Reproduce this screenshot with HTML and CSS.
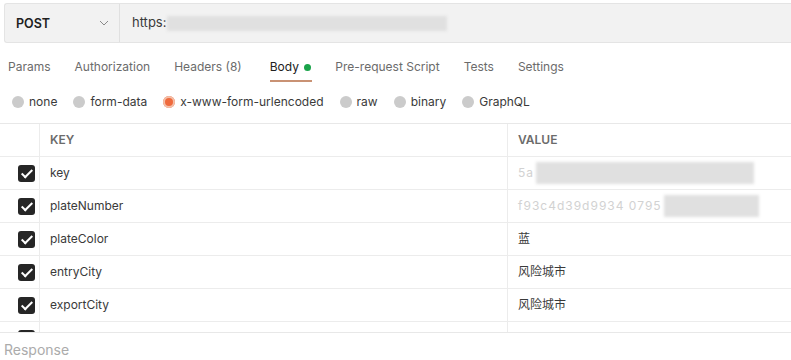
FILE: index.html
```html
<!DOCTYPE html>
<html lang="en">
  <head>
    <meta charset="UTF-8" />
    <title>Request</title>
    <link rel="stylesheet" href="styles.css">
  </head>
  <body>
    <div class="urlbar">
      <div class="method">
        <span>POST</span>
        <svg width="10" height="6" viewBox="0 0 10 6"><path d="M1 1l4 4 4-4" fill="none" stroke="#8a8a8a" stroke-width="1"/></svg>
      </div>
      <div class="url">
        <span>https:</span>
        <span class="blur url-blur"></span>
      </div>
    </div>

    <nav class="tabs">
      <span>Params</span>
      <span>Authorization</span>
      <span class="wide">Headers <em>(8)</em></span>
      <span class="active">Body <i class="dot"></i></span>
      <span>Pre-request Script</span>
      <span>Tests</span>
      <span>Settings</span>
    </nav>

    <div class="types">
      <label><i class="radio"></i>none</label>
      <label><i class="radio"></i>form-data</label>
      <label><i class="radio on"></i>x-www-form-urlencoded</label>
      <label><i class="radio"></i>raw</label>
      <label><i class="radio"></i>binary</label>
      <label><i class="radio"></i>GraphQL</label>
    </div>

    <div class="params">
      <div class="row head">
        <div class="cell"></div>
        <div class="cell">KEY</div>
        <div class="cell">VALUE</div>
      </div>
      <div class="row">
        <div class="cell"><i class="check"></i></div>
        <div class="cell">key</div>
        <div class="cell"><span class="faint">5a</span><span class="blur v1"></span></div>
      </div>
      <div class="row">
        <div class="cell"><i class="check"></i></div>
        <div class="cell">plateNumber</div>
        <div class="cell"><span class="faint">f93c4d39d9934 0795</span><span class="blur v2"></span></div>
      </div>
      <div class="row">
        <div class="cell"><i class="check"></i></div>
        <div class="cell">plateColor</div>
        <div class="cell">蓝</div>
      </div>
      <div class="row">
        <div class="cell"><i class="check"></i></div>
        <div class="cell">entryCity</div>
        <div class="cell">风险城市</div>
      </div>
      <div class="row">
        <div class="cell"><i class="check"></i></div>
        <div class="cell">exportCity</div>
        <div class="cell">风险城市</div>
      </div>
      <div class="row">
        <div class="cell"><i class="check"></i></div>
        <div class="cell"></div>
        <div class="cell"></div>
      </div>
    </div>

    <div class="response">Response</div>
  </body>
</html>
```

FILE: styles.css
```css
* {
  margin: 0;
  padding: 0;
  box-sizing: border-box;
}
body {
  width: 791px;
  height: 360px;
  overflow: hidden;
  background: #fff;
  color: #212121;
  font: 400 12px/1.2 "Inter", "Noto Sans CJK SC", sans-serif;
}
i, em {
  font-style: normal;
}

/* url bar */
.urlbar {
  display: flex;
  height: 40px;
  margin: 3px 0 0 4px;
  background: #f2f2f2;
  border: 1px solid #e4e4e4;
  border-right: none;
  border-radius: 3px 0 0 3px;
}
.method {
  width: 115px;
  display: flex;
  align-items: center;
  justify-content: space-between;
  padding: 0 10px 0 11px;
  border-right: 1px solid #e0e0e0;
  font-weight: 600;
  font-size: 12.5px;
  color: #212121;
}
.url {
  display: flex;
  align-items: center;
  padding-left: 12px;
  color: #3a3a3a;
  font-size: 13px;
}
.url-blur {
  width: 280px;
  height: 15px;
  margin-left: 1px;
}
.blur {
  display: inline-block;
  background: #e0e0e0;
  filter: blur(1.5px);
}
.faint {
  color: #d2d2d2;
  letter-spacing: 1px;
}

/* tabs */
.tabs {
  display: flex;
  height: 39px;
  padding: 17px 0 0 8px;
  color: #6b6b6b;
  line-height: 14px;
}
.tabs span {
  position: relative;
  height: 22px;
  margin-right: 24px;
}
.tabs .wide {
  margin-right: 28px;
}
.tabs .active {
  color: #212121;
}
.tabs .active::after {
  content: "";
  position: absolute;
  left: 0;
  right: -1px;
  bottom: 0;
  height: 2px;
  background: #c99274;
}
.dot {
  display: inline-block;
  width: 7px;
  height: 7px;
  margin-left: 2px;
  border-radius: 50%;
  background: #1aa34a;
  vertical-align: 0;
}

/* body types */
.types {
  display: flex;
  height: 41px;
  padding: 0 0 0 12px;
  align-items: center;
  gap: 16px;
  color: #3a3a3a;
}
.types label {
  display: flex;
  align-items: center;
  gap: 5px;
}
.radio {
  width: 12px;
  height: 12px;
  border-radius: 50%;
  background: #cbcbcb;
}
.radio.on {
  background: #ef6a3d;
  box-shadow: inset 0 0 0 2px #f3c0aa;
}

/* params table */
.params {
  height: 210px;
  overflow: hidden;
  border-top: 1px solid #e8e8e8;
  border-bottom: 1px solid #e8e8e8;
}
.row {
  display: grid;
  grid-template-columns: 40px 468px 1fr;
  height: 33px;
  border-bottom: 1px solid #ececec;
}
.cell {
  display: flex;
  align-items: center;
  padding-left: 10px;
  border-right: 1px solid #ececec;
  color: #3a3a3a;
}
.cell:first-child {
  padding-left: 18px;
}
.cell:last-child {
  border-right: none;
}
.head .cell {
  font-weight: 600;
  color: #6b6b6b;
}
.check {
  position: relative;
  width: 17px;
  height: 17px;
  border-radius: 3px;
  background: #262626;
}
.check::after {
  content: "";
  position: absolute;
  left: 6px;
  top: 2px;
  width: 4px;
  height: 9px;
  border: solid #fff;
  border-width: 0 2.5px 2.5px 0;
  transform: rotate(45deg);
}
.v1 {
  width: 218px;
  height: 22px;
  margin-left: 2px;
}
.v2 {
  width: 95px;
  height: 22px;
  margin-left: 2px;
}

.response {
  padding: 9px 0 0 4px;
  font-size: 14px;
  color: #ababab;
}
```
